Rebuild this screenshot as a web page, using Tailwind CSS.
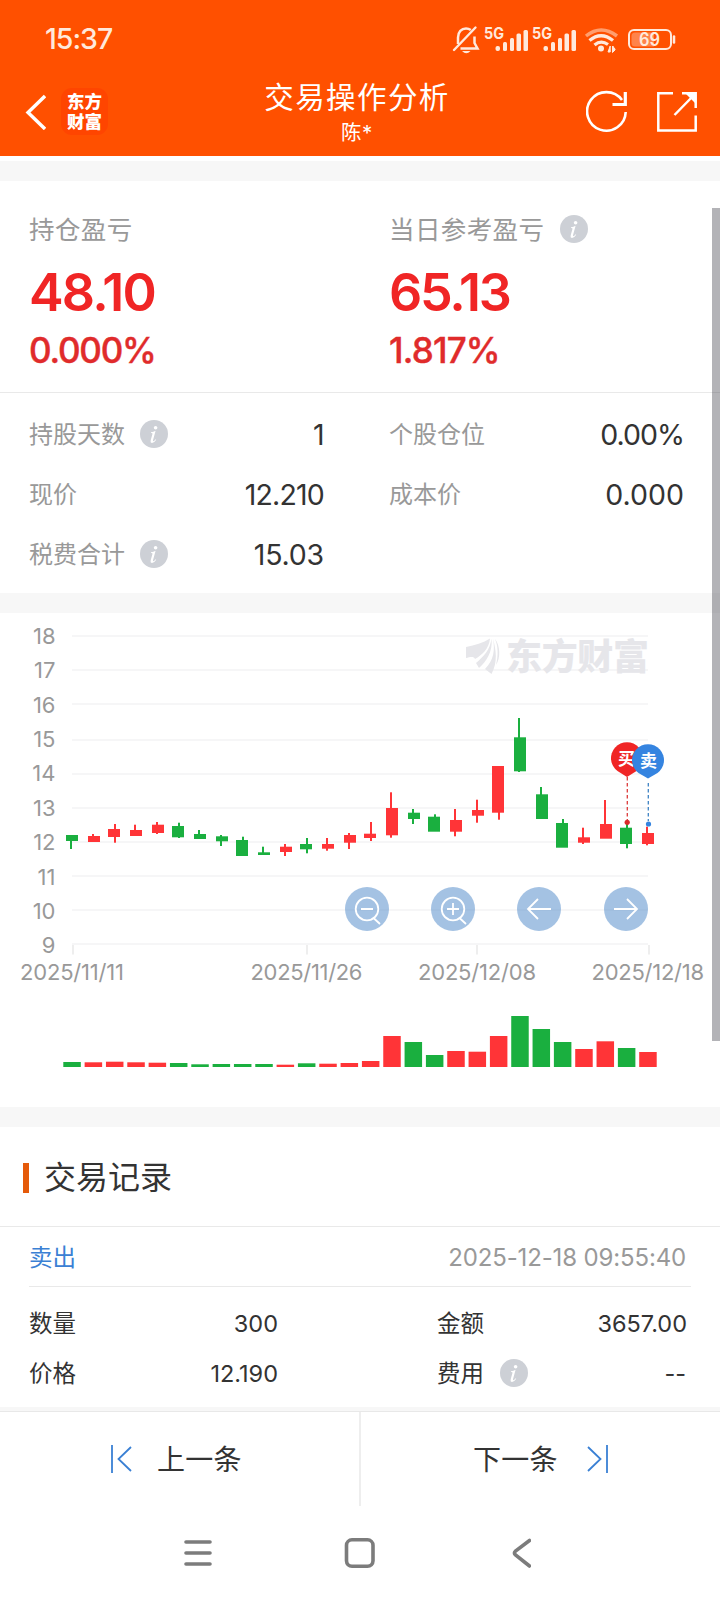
<!DOCTYPE html>
<html lang="zh-CN">
<head>
<meta charset="utf-8">
<title>交易操作分析</title>
<script src="https://cdn.jsdelivr.net/npm/@tailwindcss/browser@4"></script>
</head>
<body class="w-[720px] h-[1600px] overflow-hidden bg-white relative font-['Inter','Noto_Sans_CJK_SC',sans-serif] text-[#333] whitespace-nowrap">
<svg class="hidden">
  <symbol id="info" viewBox="0 0 28 28"><circle cx="14" cy="14" r="14" fill="#cdd0d6"/><circle cx="15.600" cy="7.800" r="1.800" fill="#fff"/><path d="M11 12.300Q13.500 12 15.600 10.800L13 20.300Q12.900 21.800 14.300 20.800L15.700 19.200L16.200 19.700Q13.800 23.300 11.800 23.100Q10 22.800 10.700 20.300L12.600 13.400Q12.500 12.900 11 13Z" fill="#fff"/></symbol>
</svg>

<header class="h-[156px] bg-[#ff5000] text-white">
  <div class="h-[76px] flex items-center justify-between pl-[45px] pr-[44px] pt-[3px]">
    <span class="text-[28.500px] font-medium tracking-[-1px] text-[#ffe9dc]">15:37</span>
    <svg width="224" height="34" viewBox="452 22 224 34" fill="none" stroke="#ffe9dc">
      <path d="M454 49 L475.500 26.500" stroke-width="2.400" stroke-linecap="round"/>
      <path d="M458 43V36.500c0-5.500 3.500-9 8-9 1.800 0 3.500.6 4.800 1.600M474.500 35.500v6.500l3 5.500H460.500" stroke-width="2.500"/>
      <path d="M462 50h8.500q-4.200 4.500-8.500 0z" fill="#ffe9dc" stroke="none"/>
      <g fill="#ffe9dc" stroke="none">
        <text x="484" y="37.500" font-size="15.500" font-weight="700" textLength="20" lengthAdjust="spacingAndGlyphs">5G</text>
        <text x="532" y="37.500" font-size="15.500" font-weight="700" textLength="20" lengthAdjust="spacingAndGlyphs">5G</text>
        <g id="bars"><rect x="495.500" y="45" width="4.500" height="5" rx="2"/><rect x="503" y="41" width="4" height="9" rx="1.500"/><rect x="510" y="37" width="4" height="13" rx="1.500"/><rect x="516.500" y="32.500" width="4.500" height="17.500" rx="1.500"/><rect x="523.500" y="29" width="4.500" height="21" rx="1.500"/></g>
        <use href="#bars" x="48"/>
        <circle cx="601" cy="47.500" r="3"/>
        <path d="M608 51l2.200-6v6zM612.500 45v6.500l2.500-2.500v-1zM613 45v6" stroke="#ffe9dc" stroke-width="1"/>
      </g>
      <path d="M586 35Q601 23 617 35" stroke-width="3.500" stroke="#ff9e6e"/>
      <path d="M589.500 39.500Q601 30 613 39.500M594.500 44Q601 38.500 608 43.500" stroke-width="3.300"/>
      <rect x="629" y="29" width="42" height="19" rx="5" stroke-width="2"/>
      <path d="M635 31.500h19v14h-19q-3.500 0-3.500-3.500v-7q0-3.500 3.500-3.500z" fill="#ff834a" stroke="none"/>
      <path d="M674 35.500v6" stroke-width="2.500" stroke-linecap="round"/>
      <text x="639" y="45" font-size="18" font-weight="600" fill="#ffe9dc" stroke="none" textLength="21" lengthAdjust="spacingAndGlyphs">69</text>
    </svg>
  </div>
  <div class="h-20 flex items-start">
    <div class="w-[230px] flex items-center gap-[15px] pl-[25px] pt-3">
      <svg width="21" height="36" viewBox="0 0 21 36" fill="none" stroke="#fff" stroke-width="3.400"><path d="M20 2 3 18.500 20 35"/></svg>
      <div class="size-[47px] rounded-[11px] bg-[#ff4500] flex flex-col items-center justify-center text-[17.5px] leading-[20px] font-black"><span>东方</span><span>财富</span></div>
    </div>
    <div class="w-[254px] flex flex-col items-center pt-px">
      <div class="text-[29.5px] leading-[40px] tracking-[1.4px]">交易操作分析</div>
      <div class="text-[20.5px] leading-[32px] tracking-[0.5px]">陈*</div>
    </div>
    <div class="flex-1 flex items-center gap-[28px] pl-[102px] pt-[14px]">
      <svg width="42" height="43" viewBox="586 90 42 43" fill="none" stroke="#fff" stroke-width="2.600"><path d="M625.700 112A19.300 19.300 0 1 1 622 100"/><path d="M625.300 92v12.500H612.500" stroke-width="3.200"/></svg>
      <svg width="42" height="42" viewBox="656 91 42 42" fill="none" stroke="#fff" stroke-width="2.500"><path d="M673 93.300H658.300V130.500H695.700V115.500M682 93.300H695.700V108M695 94 674.500 115"/><path d="M685 93h11v11z" fill="#fff" stroke="none"/></svg>
    </div>
  </div>
</header>
<div class="h-[5px]"></div>
<div class="h-5 bg-[#f7f7f7]"></div>

<section class="h-[212px] border-b border-[#e9e9e9] grid grid-cols-2 grid-rows-[184px] pt-[29px]">
  <div class="pl-[29px]">
    <div class="h-10 flex items-center text-[25.500px] tracking-[0.4px] text-[#999]">持仓盈亏</div>
    <div class="h-[85px] flex items-center text-[52px] font-semibold tracking-[-1.8px] text-[#f02525]">48.10</div>
    <div class="h-[30px] flex items-center text-[35px] font-medium tracking-[-1.2px] text-[#e02b2b] [-webkit-text-stroke:0.4px]">0.000%</div>
  </div>
  <div class="pl-[29px]">
    <div class="h-10 flex items-center gap-4 text-[25.500px] tracking-[0.4px] text-[#999]">当日参考盈亏<svg class="size-7 -mt-0.5"><use href="#info"/></svg></div>
    <div class="h-[85px] flex items-center text-[52px] font-semibold tracking-[-2.2px] text-[#f02525]">65.13</div>
    <div class="h-[30px] flex items-center text-[35px] font-medium tracking-[-0.8px] text-[#e02b2b] [-webkit-text-stroke:0.4px]">1.817%</div>
  </div>
</section>

<section class="h-[200px] grid grid-cols-2 grid-rows-[60px_60px_60px] pt-3">
  <div class="flex items-center pl-[29px] pr-[36px] text-[24px] text-[#999]">持股天数<svg class="size-7 ml-[15px] -mt-[3px]"><use href="#info"/></svg><span class="ml-auto text-[28.500px] tracking-[-0.600px] text-[#333]">1</span></div>
  <div class="flex items-center pl-[29px] pr-[36px] text-[24px] text-[#999]">个股仓位<span class="ml-auto text-[28.500px] tracking-[-1px] text-[#333]">0.00%</span></div>
  <div class="flex items-center pl-[29px] pr-[36px] text-[24px] text-[#999]">现价<span class="ml-auto text-[28.500px] tracking-[-0.800px] text-[#333]">12.210</span></div>
  <div class="flex items-center pl-[29px] pr-[36px] text-[24px] text-[#999]">成本价<span class="ml-auto text-[28.500px] tracking-[0px] text-[#333]">0.000</span></div>
  <div class="flex items-center pl-[29px] pr-[36px] text-[24px] text-[#999]">税费合计<svg class="size-7 ml-[15px] -mt-[3px]"><use href="#info"/></svg><span class="ml-auto text-[28.500px] tracking-[-0.200px] text-[#333]">15.03</span></div>
</section>
<div class="h-5 bg-[#f7f7f7]"></div>

<svg class="block" width="720" height="494" viewBox="0 613 720 494">
  <g id="grid" fill="#f6f6f7"></g>
  <path d="M73 945v9.500M307 945v9.500M477 945v9.500M649 945v9.500" stroke="#eee" stroke-width="2"/>
  <g id="ylab" fill="#999" font-size="22" text-anchor="end"></g>
  <g fill="#999" font-size="22">
    <text x="20" y="980" textLength="104">2025/11/11</text>
    <text x="250.500" y="980" textLength="112">2025/11/26</text>
    <text x="418" y="980" textLength="118">2025/12/08</text>
    <text x="591.500" y="980" textLength="112.500">2025/12/18</text>
  </g>
  <g fill="#e6e6ea">
    <path d="M466 647C475 645 483 643 490 638.500C489 649 482 655 475 659C474 656 470 657 466 658Z"/>
    <path d="M491.500 638.500C493 652 486 662 479 668L476 663C484 656 490 650 491.500 638.500Z"/>
    <path d="M493 638.500C496 650 498 662 491.500 674L485 669C494 660 495 650 493 638.500Z"/>
    <path d="M495 639C500 645 501 658 496 665C498.500 655 498 646 495 639Z"/>
    <text x="506" y="669.500" font-size="36" font-weight="900" textLength="143">东方财富</text>
  </g>
  <g id="candles"></g>
  <g id="volume"></g>
  <path d="M627.300 777v43" stroke="#dc3a3a" stroke-width="1.300" stroke-dasharray="3.500 2.500"/>
  <path d="M648.300 783v38" stroke="#3e83c4" stroke-width="1.300" stroke-dasharray="3.500 2.500"/>
  <circle cx="627.200" cy="822.300" r="2.600" fill="#d92b2b"/>
  <circle cx="648.500" cy="824" r="2.600" fill="#3584e0"/>
  <path d="M627 777L617.500 771A16 16 0 1 1 636.500 771Z" fill="#f02525"/>
  <text x="626.500" y="765" font-size="17" font-weight="700" fill="#fff" text-anchor="middle">买</text>
  <path d="M648 778.500L638.500 773A16 16 0 1 1 657.500 773Z" fill="#3584e0"/>
  <text x="648.500" y="766.500" font-size="17" font-weight="700" fill="#fff" text-anchor="middle">卖</text>
  <g fill="#4a86c8" fill-opacity=".5"><circle cx="367" cy="909" r="22"/><circle cx="453" cy="909" r="22"/><circle cx="539" cy="909" r="22"/><circle cx="626" cy="909" r="22"/></g>
  <g fill="none" stroke="#fff" stroke-width="1.800">
    <circle cx="367" cy="909" r="11.300"/><path d="M361 909h12M373.500 918l6.500 6"/>
    <circle cx="453" cy="909" r="11.300"/><path d="M447 909h12M453 903v12M459.500 918l6.500 6"/>
    <path d="M551 909H528M538 899 528 909 538 919"/>
    <path d="M614 909H637M627 899 637 909 627 919"/>
  </g>
</svg>
<div class="h-5 bg-[#f7f7f7]"></div>

<section class="h-[280px]">
  <div class="h-[100px] border-b border-[#e9e9e9] flex items-center pl-[23px] pt-0.5 gap-[15px] text-[32px]"><span class="w-1.5 h-[30px] bg-[#e55a0a]"></span>交易记录</div>
  <div class="h-[60px] mx-[29px] border-b border-[#e9e9e9] flex items-center justify-between pt-[3px] pr-[5px]"><span class="text-[23.500px] text-[#3a80d4]">卖出</span><span class="text-[24px] tracking-[-0.150px] text-[#999]">2025-12-18 09:55:40</span></div>
  <div class="h-[120px] pt-3 pl-[29px] pr-[34px] grid grid-cols-[249px_auto] grid-rows-[50px_50px] gap-x-[159px] text-[23.500px]">
    <div class="flex items-center justify-between">数量<span>300</span></div>
    <div class="flex items-center justify-between">金额<span class="-mr-px">3657.00</span></div>
    <div class="flex items-center justify-between">价格<span>12.190</span></div>
    <div class="flex items-center">费用<svg class="size-7 ml-4 -mt-[3px]"><use href="#info"/></svg><span class="ml-auto">--</span></div>
  </div>
</section>
<div class="h-[4px] bg-[#f7f7f7]"></div>
<nav class="h-[95px] border-t border-[#e8e8e8] flex text-[28px]">
  <div class="w-[361px] border-r-2 border-[#eee] flex items-center pl-[110px] gap-[25px]"><svg width="22" height="30" viewBox="0 0 22 30" fill="none" stroke="#3a80d4" stroke-width="1.800"><path d="M2 1v28M21 3 8.500 15 21 27"/></svg><span class="pt-0.5 tracking-[0.3px]">上一条</span></div>
  <div class="flex-1 flex items-center pl-[112px] gap-[29px]"><span class="pt-0.5 tracking-[0.3px]">下一条</span><svg width="22" height="30" viewBox="0 0 22 30" fill="none" stroke="#3a80d4" stroke-width="1.800"><path d="M20 1v28M1 3 13.500 15 1 27"/></svg></div>
</nav>
<div class="h-[94px] flex items-center pl-[181px]">
  <svg width="350" height="34" viewBox="183 1536 350 34" fill="none" stroke="#7c7c7c" stroke-width="3.600" stroke-linecap="round"><path d="M188 1542h24M188 1553h24M188 1564h24"/><rect x="348.500" y="1539.800" width="26.500" height="26.500" rx="5.500"/><path d="M531.500 1540.500 517.500 1551q-2 2 0 4L531.500 1566"/></svg>
</div>

<div class="absolute left-[712px] top-[208px] w-2 h-[833px] bg-[#3c3c46]/39"></div>

<script>
const NS = 'http://www.w3.org/2000/svg', G = '#1aaf3f', R = '#ff3437';
const add = (id, tag, attrs, text) => {
  const e = document.createElementNS(NS, tag);
  for (const k in attrs) e.setAttribute(k, attrs[k]);
  if (text) e.textContent = text;
  document.getElementById(id).appendChild(e);
};
[635,669,703,739,773,807,841,875,909,943].forEach((y, i) => {
  add('grid', 'rect', {x: 72, y, width: 576, height: 2});
  add('ylab', 'text', {x: 55.5, y: 643.7 + i * 34.4}, String(18 - i));
});
// body left, body top, body bottom, wick x, wick top, wick bottom, colour
[[66,835,841,71,835,849,G],[88,836,842,93,834,842,R],[108,829,837,115,824,842.7,R],[130,830,836,135,824.7,836,R],
[152,824.7,833,157,822,834,R],[172,826,837.3,179,822.7,838,G],[194,834,839,199,830,839,G],[216,836.3,841.3,221,835,846,G],
[236,840,856,243,836.7,856,G],[258,852.3,855,263,846.7,855,G],[280,846.7,852,285,844,856,R],[300,844,849.3,307,838,853.3,G],
[322,844,848.7,327,838,850.7,R],[344,835,842.7,349,833,849,R],[364,833.7,838,371,822,841,R],[386,808,835.3,391,792.3,837.7,R],
[408,812.7,819,413,809,824,G],[428,816.7,831.7,435,814.3,831,G],[450,820,831.7,455,809,836.3,R],[472,810,815.7,477,799.7,822.7,R],
[492,766,812.7,499,766,819.7,R],[514,737.3,771.3,519,718,772,G],[536,794.3,819,541,787,819,G],[556,823,847.7,563,819,847,G],
[578,837.3,842.7,583,827.7,844,R],[600,824,838.7,605,800,838,R],[620,827.7,844,627,823.3,848.3,G],[642,833,844,647,826.7,845.3,R]
].forEach(([x, t, b, w, wt, wb, fill]) => {
  add('candles', 'rect', {x: w - 1, y: wt, width: 2, height: wb - wt, fill});
  add('candles', 'rect', {x, y: t, width: 12, height: b - t, fill});
});
[[1062,G],[1062.3,R],[1061.7,R],[1062.3,R],[1062.7,R],[1063,G],[1064.3,G],[1064,G],[1064,G],[1064,G],[1064.7,R],[1063.3,G],[1063.7,R],[1063,R],
[1061,R],[1036,R],[1042,G],[1055,G],[1051,R],[1051.7,R],[1036,R],[1016,G],[1029,G],[1042,G],[1049,R],[1041.3,R],[1048,G],[1052,R]
].forEach(([y, fill], i) => add('volume', 'rect', {x: 63.3 + 21.33 * i, y, width: 17.5, height: 1067 - y, fill}));
</script>
</body>
</html>
